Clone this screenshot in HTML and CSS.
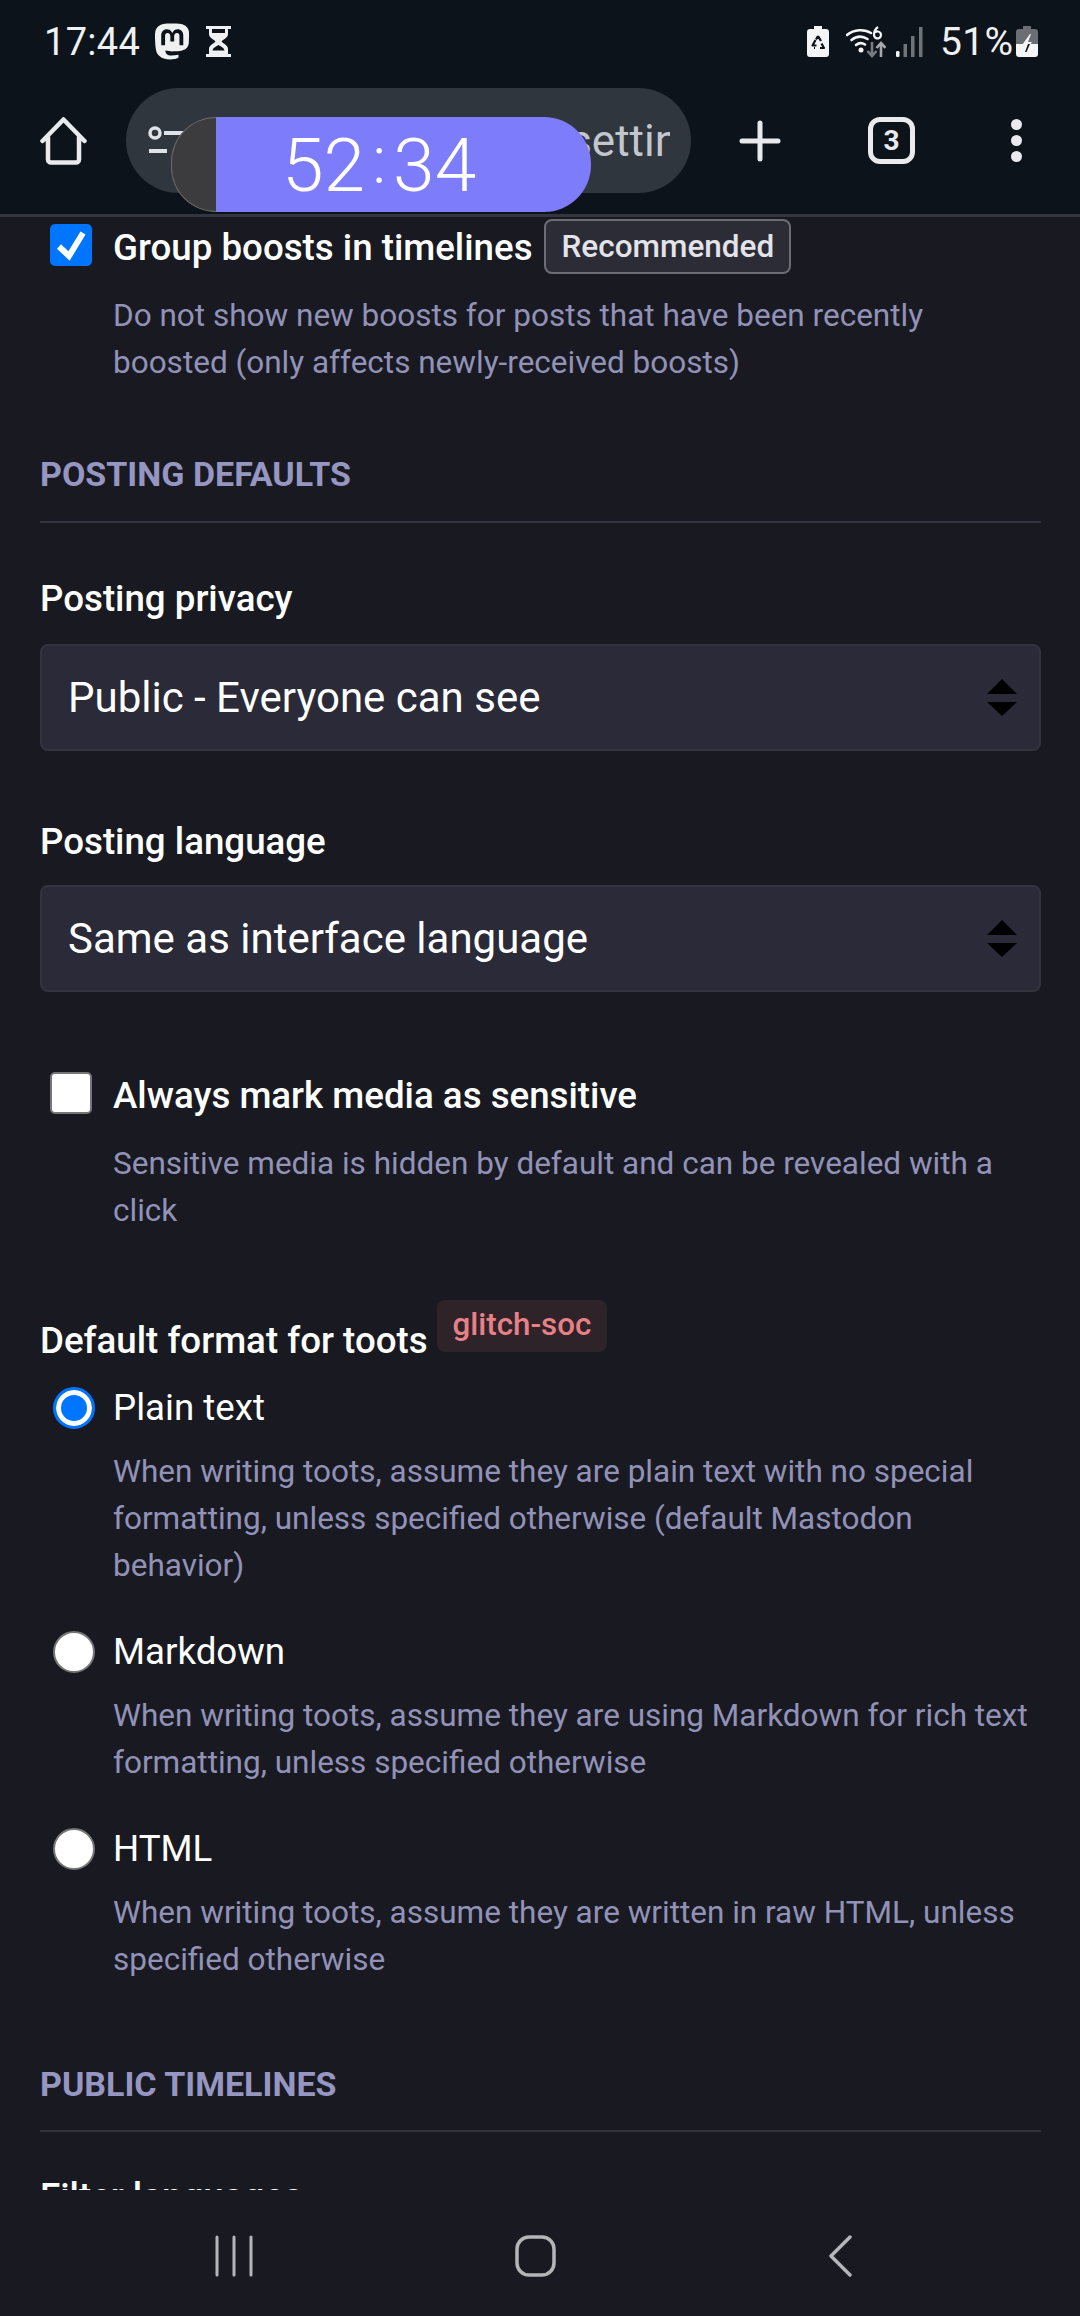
FILE: index.html
```html
<!DOCTYPE html>
<html lang="en">
<head>
  <meta charset="UTF-8">
  <meta name="viewport" content="width=device-width, initial-scale=1">
  <title>Preferences</title>
  <link rel="stylesheet" href="styles.css">
</head>
<body>

<!-- Phone status bar + browser toolbar -->
<div class="top">
  <div class="status">
    <div class="status-left">
      <span class="clock">17:44</span>
      <svg class="ic-masto" viewBox="0 0 24 24"><path fill="#eef0f1" d="M23.268 5.313c-.35-2.578-2.617-4.61-5.304-5.004C17.51.242 15.792 0 11.813 0h-.03c-3.98 0-4.835.242-5.288.309C3.882.692 1.496 2.518.917 5.127.64 6.412.61 7.837.661 9.143c.074 1.874.088 3.745.26 5.611.118 1.24.325 2.47.62 3.68.55 2.237 2.777 4.098 4.96 4.857 2.336.792 4.849.923 7.256.38.265-.061.527-.132.786-.213.585-.184 1.27-.39 1.774-.753a.057.057 0 0 0 .023-.043v-1.809a.052.052 0 0 0-.02-.041.053.053 0 0 0-.046-.01 20.282 20.282 0 0 1-4.709.545c-2.73 0-3.463-1.284-3.674-1.818a5.593 5.593 0 0 1-.319-1.433.053.053 0 0 1 .066-.054c1.517.363 3.072.546 4.632.546.376 0 .75 0 1.125-.01 1.57-.044 3.224-.124 4.768-.422.038-.008.077-.015.11-.024 2.435-.464 4.753-1.92 4.989-5.604.008-.145.03-1.52.03-1.67.002-.512.167-3.63-.024-5.545zm-3.748 9.195h-2.561V8.29c0-1.309-.55-1.976-1.67-1.976-1.23 0-1.846.79-1.846 2.35v3.403h-2.546V8.663c0-1.56-.617-2.35-1.848-2.35-1.112 0-1.668.668-1.67 1.977v6.218H4.822V8.102c0-1.31.337-2.35 1.011-3.12.696-.77 1.608-1.164 2.74-1.164 1.311 0 2.302.5 2.962 1.498l.638 1.06.638-1.06c.66-.999 1.65-1.498 2.96-1.498 1.13 0 2.043.395 2.74 1.164.675.77 1.012 1.81 1.012 3.12z"/></svg>
      <svg class="ic-hourglass" viewBox="0 0 27 31"><path fill="#eef0f1" d="M1 0h25v3h-3v5c0 4-5 5.500-6.500 7.500C18 17.500 23 19 23 23v5h3v3H1v-3h3v-5c0-4 5-5.500 6.500-7.500C9 13.500 4 12 4 8V3H1z"/><path fill="#0d131a" d="M7 3h13v4H7zM13.500 19c-2 1.500-5.500 2.500-6 5.500h12c-.5-3-4-4-6-5.500z"/></svg>
    </div>
    <div class="status-right">
      <svg class="ic-batt" viewBox="0 0 22 31"><path fill="#f4f5f6" d="M7 0h8v3h4a3 3 0 0 1 3 3v22a3 3 0 0 1-3 3H3a3 3 0 0 1-3-3V6a3 3 0 0 1 3-3h4z"/><path fill="none" stroke="#0d131a" stroke-width="2.200" stroke-linejoin="round" d="M11 10l3 5M8.500 14l-3 5.500h4M13 22h4l-2.500-4.500M11 10l-2 3.500M7 22h1"/></svg>
      <svg class="ic-wifi" viewBox="0 0 40 32"><g fill="none" stroke="#f4f5f6" stroke-width="2.600" stroke-linecap="round"><path d="M1 9c7-6 18-6 24-2"/><path d="M5.500 14c5-4 11-4 16-1"/><path d="M10 19c3-2.500 6-2.500 9-.5"/></g><circle cx="15" cy="24" r="2.500" fill="#f4f5f6"/><path fill="none" stroke="#f4f5f6" stroke-width="2.200" d="M32 1c-3 2-4 5-4 8a3.500 3.500 0 1 0 1-2.500"/><path fill="none" stroke="#777c80" stroke-width="2.600" d="M26 16v13M21.500 25l4.500 5 4.500-5"/><path fill="none" stroke="#a5a9ac" stroke-width="2.600" d="M35 31V18M30.500 22l4.500-5 4.500 5"/></svg>
      <svg class="ic-signal" viewBox="0 0 27 30"><rect x="0" y="24" width="3.500" height="6" rx="1.200" fill="#f4f5f6"/><rect x="7.500" y="17" width="3.500" height="13" fill="#6f7478"/><rect x="15" y="9" width="3.500" height="21" fill="#6f7478"/><rect x="23" y="0" width="3.500" height="30" fill="#6f7478"/></svg>
      <span class="pct">51%</span>
      <svg class="ic-batt2" viewBox="0 0 22 31"><path fill="#6b6f75" d="M7 0h8v3h4a3 3 0 0 1 3 3v12H0V6a3 3 0 0 1 3-3h4z"/><path fill="#f4f5f6" d="M0 18h22v10a3 3 0 0 1-3 3H3a3 3 0 0 1-3-3z"/><path fill="#f4f5f6" d="M14 8L6 19h4l-2 7 1 0 7-10h-4l3-8z"/><path fill="#0d131a" d="M12 18l-3 8 1.500 0 3.500-8z"/></svg>
    </div>
  </div>

  <div class="toolbar">
    <svg class="ic-home" viewBox="0 0 47 48"><path fill="none" stroke="#e8eaed" stroke-width="4.500" stroke-linejoin="round" stroke-linecap="round" d="M2.500 24L23.500 2.500 44.500 24M8 20v22.500a3 3 0 0 0 3 3h25a3 3 0 0 0 3-3V20"/></svg>
    <div class="url-pill">
      <svg class="ic-tune" viewBox="0 0 40 30"><circle cx="7" cy="7" r="5" fill="none" stroke="#dfe2e6" stroke-width="3.500"/><path stroke="#dfe2e6" stroke-width="4" d="M16 7h20M1 25h18"/></svg>
      <span class="url-text">/settings/preferences</span>
    </div>
    <svg class="ic-plus" viewBox="0 0 42 42"><path stroke="#e8eaed" stroke-width="5" stroke-linecap="round" d="M21 3v36M3 21h36"/></svg>
    <div class="tabs">3</div>
    <div class="dots"><i></i><i></i><i></i></div>
  </div>
</div>

<!-- Floating timer overlay -->
<div class="timer">
  <div class="timer-grip"></div>
  <div class="timer-time"><span>52</span><span class="colon">:</span><span>34</span></div>
</div>

<!-- Settings form -->
<div class="form">
  <div class="check-row">
    <div class="checkbox checked">
      <svg viewBox="0 0 42 42"><path fill="none" stroke="#fff" stroke-width="6" d="M9 22.500l10 9.500L33 9"/></svg>
    </div>
    <div class="opt-label">Group boosts in timelines</div>
    <div class="rec-badge">Recommended</div>
  </div>
  <div class="hint">Do not show new boosts for posts that have been recently boosted (only affects newly-received boosts)</div>

  <div class="section-title first">POSTING DEFAULTS</div>

  <div class="field-label privacy">Posting privacy</div>
  <div class="select">
    Public - Everyone can see
    <svg class="arrows" viewBox="0 0 30 37"><path d="M15 0l15 15H0zM0 23h30L15 37z"/></svg>
  </div>

  <div class="field-label language">Posting language</div>
  <div class="select">
    Same as interface language
    <svg class="arrows" viewBox="0 0 30 37"><path d="M15 0l15 15H0zM0 23h30L15 37z"/></svg>
  </div>

  <div class="check-row sensitive">
    <div class="checkbox"></div>
    <div class="opt-label">Always mark media as sensitive</div>
  </div>
  <div class="hint">Sensitive media is hidden by default and can be revealed with a click</div>

  <div class="format-row">
    <div class="field-label">Default format for toots</div>
    <div class="soc-badge">glitch-soc</div>
  </div>

  <div class="radio-row first-radio">
    <div class="radio selected"></div>
    <div class="radio-label">Plain text</div>
  </div>
  <div class="hint radio-hint">When writing toots, assume they are plain text with no special formatting, unless specified otherwise (default Mastodon behavior)</div>

  <div class="radio-row">
    <div class="radio"></div>
    <div class="radio-label">Markdown</div>
  </div>
  <div class="hint radio-hint">When writing toots, assume they are using Markdown for rich text formatting, unless specified otherwise</div>

  <div class="radio-row">
    <div class="radio"></div>
    <div class="radio-label">HTML</div>
  </div>
  <div class="hint radio-hint">When writing toots, assume they are written in raw HTML, unless specified otherwise</div>

  <div class="section-title second">PUBLIC TIMELINES</div>
  <div class="field-label filter">Filter languages</div>
</div>

<!-- Phone navigation bar -->
<div class="navbar">
  <svg class="ic-recent" viewBox="0 0 38 42"><path stroke="#b4b5b8" stroke-width="3" stroke-linecap="round" d="M2 2v38M19 2v38M36 2v38"/></svg>
  <svg class="ic-square" viewBox="0 0 41 42"><rect x="2" y="2" width="37" height="38" rx="12" fill="none" stroke="#b4b5b8" stroke-width="3.500"/></svg>
  <svg class="ic-back" viewBox="0 0 24 42"><path fill="none" stroke="#b4b5b8" stroke-width="3.500" stroke-linecap="round" stroke-linejoin="round" d="M22 2L3 21l19 19"/></svg>
</div>

</body>
</html>
```

FILE: styles.css
```css
* {
  box-sizing: border-box;
}
body {
  margin: 0;
  width: 1080px;
  height: 2316px;
  overflow: hidden;
  position: relative;
  font-family: 'Roboto', sans-serif;
  background-color: #191a21;
  color: #fff;
}
svg {
  display: block;
  flex: none;
}

/* Status bar */
.top {
  height: 217px;
  background-color: #0d131a;
  border-bottom: 3px solid #33363f;
}
.status {
  height: 88px;
  padding: 23px 42px 0 44px;
  display: flex;
  justify-content: space-between;
  align-items: flex-start;
}
.status-left, .status-right {
  display: flex;
  align-items: center;
  height: 37px;
}
.clock {
  font-size: 38px;
  color: #eef0f1;
  width: 110px;
  letter-spacing: 0.3px;
}
.ic-masto {
  width: 36px;
  height: 37px;
}
.ic-hourglass {
  width: 27px;
  height: 31px;
  margin-left: 15px;
}
.ic-batt {
  width: 22px;
  height: 31px;
}
.ic-wifi {
  width: 40px;
  height: 32px;
  margin-left: 17px;
}
.ic-signal {
  width: 27px;
  height: 30px;
  margin-left: 10px;
}
.pct {
  font-size: 39px;
  color: #eef0f1;
  margin-left: 17px;
  width: 76px;
  letter-spacing: 0.3px;
}
.ic-batt2 {
  width: 22px;
  height: 31px;
}

/* Browser toolbar */
.toolbar {
  display: flex;
  align-items: center;
  height: 105px;
  padding-left: 40px;
}
.ic-home {
  width: 47px;
  height: 48px;
}
.url-pill {
  width: 565px;
  height: 105px;
  margin-left: 39px;
  padding: 0 21px 0 22px;
  border-radius: 53px;
  background-color: #30363e;
  display: flex;
  align-items: center;
  overflow: hidden;
}
.ic-tune {
  width: 40px;
  height: 30px;
}
.url-text {
  margin-left: 363px;
  font-size: 44px;
  color: #c3c7cd;
  white-space: nowrap;
  overflow: hidden;
}
.ic-plus {
  width: 42px;
  height: 42px;
  margin-left: 48px;
}
.tabs {
  width: 47px;
  height: 47px;
  margin-left: 87px;
  border: 5px solid #e8eaed;
  border-radius: 12px;
  color: #e8eaed;
  font-size: 28px;
  font-weight: 700;
  display: flex;
  align-items: center;
  justify-content: center;
}
.dots {
  margin-left: 96px;
  display: flex;
  flex-direction: column;
  gap: 5px;
}
.dots i {
  display: block;
  width: 11px;
  height: 11px;
  border-radius: 50%;
  background-color: #e8eaed;
}

/* Timer overlay */
.timer {
  position: absolute;
  left: 171px;
  top: 117px;
  width: 420px;
  height: 95px;
  display: flex;
}
.timer-grip {
  width: 45px;
  border-radius: 47px 0 0 47px;
  background-color: #3c3c3e;
  border: 1px solid #6a6a6c;
  border-right: none;
}
.timer-time {
  flex: 1;
  border-radius: 0 47px 47px 0;
  background-color: #7d7dfb;
  color: #fff;
  font-size: 75px;
  font-weight: 300;
  display: flex;
  align-items: center;
  padding-left: 66px;
}
.colon {
  font-size: 66px;
  margin: -8px 7px 0;
}

/* Form */
.form {
  height: 1973px;
  overflow: hidden;
  padding: 2px 39px 0 40px;
}
.check-row {
  display: flex;
  align-items: flex-start;
  height: 55px;
}
.checkbox {
  width: 42px;
  height: 42px;
  margin: 5px 21px 0 10px;
  border-radius: 5px;
  background-color: #fff;
  border: 2px solid #767676;
  flex: none;
}
.checkbox.checked {
  background-color: #0075ff;
  border: none;
}
.opt-label {
  font-size: 36.700px;
  font-weight: 500;
  line-height: 57px;
}
.rec-badge {
  margin-left: 11px;
  height: 55px;
  padding: 0 15px 0 16px;
  border: 2px solid #6c6c74;
  border-radius: 8px;
  background-color: #2c2c36;
  color: #e3e3ea;
  font-size: 31.500px;
  font-weight: 500;
  line-height: 51px;
}
.hint {
  margin: 18px 0 0 73px;
  font-size: 31.500px;
  line-height: 47px;
  color: #9292b8;
}
.radio-hint {
  margin-top: 12px;
}
.section-title {
  font-size: 34px;
  font-weight: 700;
  line-height: 47px;
  color: #9696c2;
  padding-bottom: 23px;
  border-bottom: 2px solid #33333f;
}
.section-title.first {
  margin-top: 65px;
}
.section-title.second {
  margin-top: 78px;
  padding-bottom: 22px;
}
.field-label {
  font-size: 36.700px;
  font-weight: 500;
  line-height: 47px;
}
.field-label.privacy {
  margin: 52px 0 22px;
}
.field-label.language {
  margin: 67px 0 20px;
}
.field-label.filter {
  margin-top: 41px;
}
.select {
  height: 107px;
  padding: 0 22px 0 26px;
  border: 2px solid #33333f;
  border-radius: 8px;
  background-color: #2a2a38;
  font-size: 42px;
  display: flex;
  align-items: center;
  justify-content: space-between;
}
.arrows {
  width: 30px;
  height: 37px;
}
.check-row.sensitive {
  margin-top: 75px;
}
.format-row {
  display: flex;
  margin-top: 83px;
}
.soc-badge {
  margin: -17px 0 0 9px;
  height: 52px;
  padding: 0 16px 0 16px;
  border-radius: 8px;
  background-color: #2e2329;
  color: #e88087;
  font-size: 31.300px;
  font-weight: 500;
  line-height: 50px;
}
.radio-row {
  display: flex;
  align-items: flex-start;
  height: 55px;
  margin-top: 36px;
}
.radio-row.first-radio {
  margin-top: 17px;
}
.radio {
  width: 42px;
  height: 42px;
  margin: 6px 18px 0 13px;
  border-radius: 50%;
  background-color: #fff;
  border: 2px solid #767676;
  flex: none;
}
.radio.selected {
  background-color: #0075ff;
  border: 3px solid #0075ff;
  box-shadow: inset 0 0 0 5px #fff;
}
.radio-label {
  font-size: 36.700px;
  line-height: 54px;
}

/* Navigation bar */
.navbar {
  height: 126px;
  padding: 45px 0 0 215px;
  display: flex;
  align-items: flex-start;
  background-color: #191a21;
}
.ic-recent {
  width: 38px;
  height: 42px;
}
.ic-square {
  width: 41px;
  height: 42px;
  margin-left: 262px;
}
.ic-back {
  width: 24px;
  height: 42px;
  margin-left: 272px;
}
```
